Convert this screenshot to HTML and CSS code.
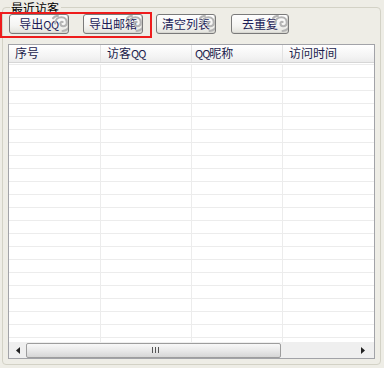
FILE: index.html
```html
<!DOCTYPE html>
<html>
<head>
<meta charset="utf-8">
<link rel="stylesheet" href="styles.css">
</head>
<body>
<div class="group">
  <div class="legend">最近访客</div>
  <div class="toolbar">
    <button class="btn b1">导出<span class="lat">QQ</span><svg class="swirl" viewBox="0 0 18 18"><path d="M3 10c0-3.5 2.5-6 6-6s5 2.5 5 5-1.8 3.5-3.5 3.5-2.5-1.2-2.5-2.5 1-2 2-1.5M10 17c4 0 7-3 7-7M1 5c1.2-1.5 3-2.2 4.5-2.2M15 2.5c1.5 0 2.5 1 2.5 2.5" /></svg></button>
    <button class="btn b2">导出邮箱<svg class="swirl" viewBox="0 0 18 18"><path d="M3 10c0-3.5 2.5-6 6-6s5 2.5 5 5-1.8 3.5-3.5 3.5-2.5-1.2-2.5-2.5 1-2 2-1.5M10 17c4 0 7-3 7-7M1 5c1.2-1.5 3-2.2 4.5-2.2M15 2.5c1.5 0 2.5 1 2.5 2.5" /></svg></button>
    <button class="btn b3">清空列表<svg class="swirl" viewBox="0 0 18 18"><path d="M3 10c0-3.5 2.5-6 6-6s5 2.5 5 5-1.8 3.5-3.5 3.5-2.5-1.2-2.5-2.5 1-2 2-1.5M10 17c4 0 7-3 7-7M1 5c1.2-1.5 3-2.2 4.5-2.2M15 2.5c1.5 0 2.5 1 2.5 2.5" /></svg></button>
    <button class="btn b4">去重复<svg class="swirl" viewBox="0 0 18 18"><path d="M3 10c0-3.5 2.5-6 6-6s5 2.5 5 5-1.8 3.5-3.5 3.5-2.5-1.2-2.5-2.5 1-2 2-1.5M10 17c4 0 7-3 7-7M1 5c1.2-1.5 3-2.2 4.5-2.2M15 2.5c1.5 0 2.5 1 2.5 2.5" /></svg></button>
  </div>
  <div class="list">
    <div class="head">
      <div class="hc c1">序号</div>
      <div class="hc c2">访客<span class="lat">QQ</span></div>
      <div class="hc c3"><span class="lat">QQ</span>昵称</div>
      <div class="hc c4">访问时间</div>
    </div>
    <div class="rows">
      <div class="row"><i class="c1"></i><i class="c2"></i><i class="c3"></i><i class="c4"></i></div>
      <div class="row"><i class="c1"></i><i class="c2"></i><i class="c3"></i><i class="c4"></i></div>
      <div class="row"><i class="c1"></i><i class="c2"></i><i class="c3"></i><i class="c4"></i></div>
      <div class="row"><i class="c1"></i><i class="c2"></i><i class="c3"></i><i class="c4"></i></div>
      <div class="row"><i class="c1"></i><i class="c2"></i><i class="c3"></i><i class="c4"></i></div>
      <div class="row"><i class="c1"></i><i class="c2"></i><i class="c3"></i><i class="c4"></i></div>
      <div class="row"><i class="c1"></i><i class="c2"></i><i class="c3"></i><i class="c4"></i></div>
      <div class="row"><i class="c1"></i><i class="c2"></i><i class="c3"></i><i class="c4"></i></div>
      <div class="row"><i class="c1"></i><i class="c2"></i><i class="c3"></i><i class="c4"></i></div>
      <div class="row"><i class="c1"></i><i class="c2"></i><i class="c3"></i><i class="c4"></i></div>
      <div class="row"><i class="c1"></i><i class="c2"></i><i class="c3"></i><i class="c4"></i></div>
      <div class="row"><i class="c1"></i><i class="c2"></i><i class="c3"></i><i class="c4"></i></div>
      <div class="row"><i class="c1"></i><i class="c2"></i><i class="c3"></i><i class="c4"></i></div>
      <div class="row"><i class="c1"></i><i class="c2"></i><i class="c3"></i><i class="c4"></i></div>
      <div class="row"><i class="c1"></i><i class="c2"></i><i class="c3"></i><i class="c4"></i></div>
      <div class="row"><i class="c1"></i><i class="c2"></i><i class="c3"></i><i class="c4"></i></div>
      <div class="row"><i class="c1"></i><i class="c2"></i><i class="c3"></i><i class="c4"></i></div>
      <div class="row"><i class="c1"></i><i class="c2"></i><i class="c3"></i><i class="c4"></i></div>
      <div class="row"><i class="c1"></i><i class="c2"></i><i class="c3"></i><i class="c4"></i></div>
      <div class="row"><i class="c1"></i><i class="c2"></i><i class="c3"></i><i class="c4"></i></div>
      <div class="row"><i class="c1"></i><i class="c2"></i><i class="c3"></i><i class="c4"></i></div>
      <div class="row"><i class="c1"></i><i class="c2"></i><i class="c3"></i><i class="c4"></i></div>
    </div>
    <div class="hscroll">
      <div class="arrow"><svg width="4" height="7" viewBox="0 0 4 7"><path d="M4 0L0 3.5L4 7Z" fill="#222"/></svg></div>
      <div class="thumb"><span class="grip"></span></div>
      <div class="track"></div>
      <div class="arrow"><svg width="4" height="7" viewBox="0 0 4 7"><path d="M0 0L4 3.5L0 7Z" fill="#222"/></svg></div>
    </div>
  </div>
</div>
<div class="annot"></div>
</body>
</html>
```
FILE: styles.css
```css
* { box-sizing: border-box; }
html, body { margin: 0; padding: 0; }
body {
  width: 384px;
  height: 368px;
  background: #eeede6;
  font-family: "Noto Sans CJK SC", "Noto Sans", sans-serif;
  font-size: 12px;
  color: #1a1a4a;
  position: relative;
  overflow: hidden;
  padding-top: 7px;
}
.lat {
  font-size: 11px;
  letter-spacing: -1px;
}
.group {
  margin: 0 3px 0 2px;
  height: 358px;
  border: 1px solid #d3d2c6;
  border-radius: 4px;
  display: flex;
  flex-direction: column;
}
.legend {
  align-self: flex-start;
  margin: -7px 0 0 7px;
  padding: 0 2px 0 1px;
  background: #eeede6;
  line-height: 13px;
  height: 13px;
  color: #000;
}
.toolbar {
  display: flex;
  margin-top: 0;
  padding-left: 6px;
  height: 21px;
}
.btn {
  position: relative;
  height: 20px;
  width: 60px;
  padding: 0;
  border: 1px solid #7a7a7a;
  border-radius: 3px;
  background: linear-gradient(#fefefe, #f4f4f2 60%, #e2e2dc);
  font-family: inherit;
  font-size: 12px;
  line-height: 16px;
  color: #1c1c58;
  overflow: hidden;
  box-shadow: inset -1px -1px 0 #d8d8d2;
}
.btn .lat { letter-spacing: -0.5px; }
.b2 { margin-left: 14px; }
.b3 { margin-left: 13px; }
.b4 { margin-left: 15px; width: 58px; }
.swirl {
  position: absolute;
  right: -3px;
  top: -2px;
  width: 19px;
  height: 19px;
  fill: none;
  stroke: #b4b4b4;
  stroke-width: 2;
  stroke-linecap: round;
}
.list {
  margin: 9px 5px 5px 5px;
  flex: 1;
  border: 1px solid #a2a3a8;
  background: #fff;
  display: flex;
  flex-direction: column;
  overflow: hidden;
}
.head {
  display: flex;
  height: 18px;
  background: linear-gradient(#ffffff, #f3f3f3 70%, #ebebeb);
  border-bottom: 1px solid #d6d6d6;
  box-shadow: 0 1px 0 #fff, 0 2px 0 #ececec;
  margin-bottom: 2px;
}
.hc {
  line-height: 16px;
  padding-left: 6px;
  border-right: 1px solid #e2e2e2;
  color: #1c1c4c;
}
.c1 { width: 92px; }
.c2 { width: 91px; }
.c3 { width: 91px; padding-left: 3px; }
.c4 { flex: 1; border-right: 0; }
.rows {
  flex: 1;
  overflow: hidden;
}
.row {
  display: flex;
  height: 13px;
  border-bottom: 1px solid #ececec;
}
.row i {
  display: block;
  height: 100%;
  border-right: 1px solid #ececec;
}
.row i.c4 { border-right: 0; }
.hscroll {
  height: 16px;
  display: flex;
  align-items: center;
  background: #efefef;
  padding: 0 3px 0 0;
}
.arrow {
  width: 17px;
  height: 16px;
  display: flex;
  align-items: center;
  justify-content: center;
}
.thumb {
  width: 255px;
  height: 15px;
  border: 1px solid #9d9d9d;
  border-radius: 2px;
  background: linear-gradient(#f8f8f8, #e9e9e9 50%, #d6d6d6);
  display: flex;
  align-items: center;
  justify-content: center;
}
.grip {
  width: 7px;
  height: 6px;
  background: repeating-linear-gradient(90deg, #555 0 1px, transparent 1px 3px);
  margin-left: 4px;
}
.track { flex: 1; }
.annot {
  position: absolute;
  left: 0;
  top: 12px;
  width: 152px;
  height: 26px;
  border: 2px solid #ee1c1c;
}
```
